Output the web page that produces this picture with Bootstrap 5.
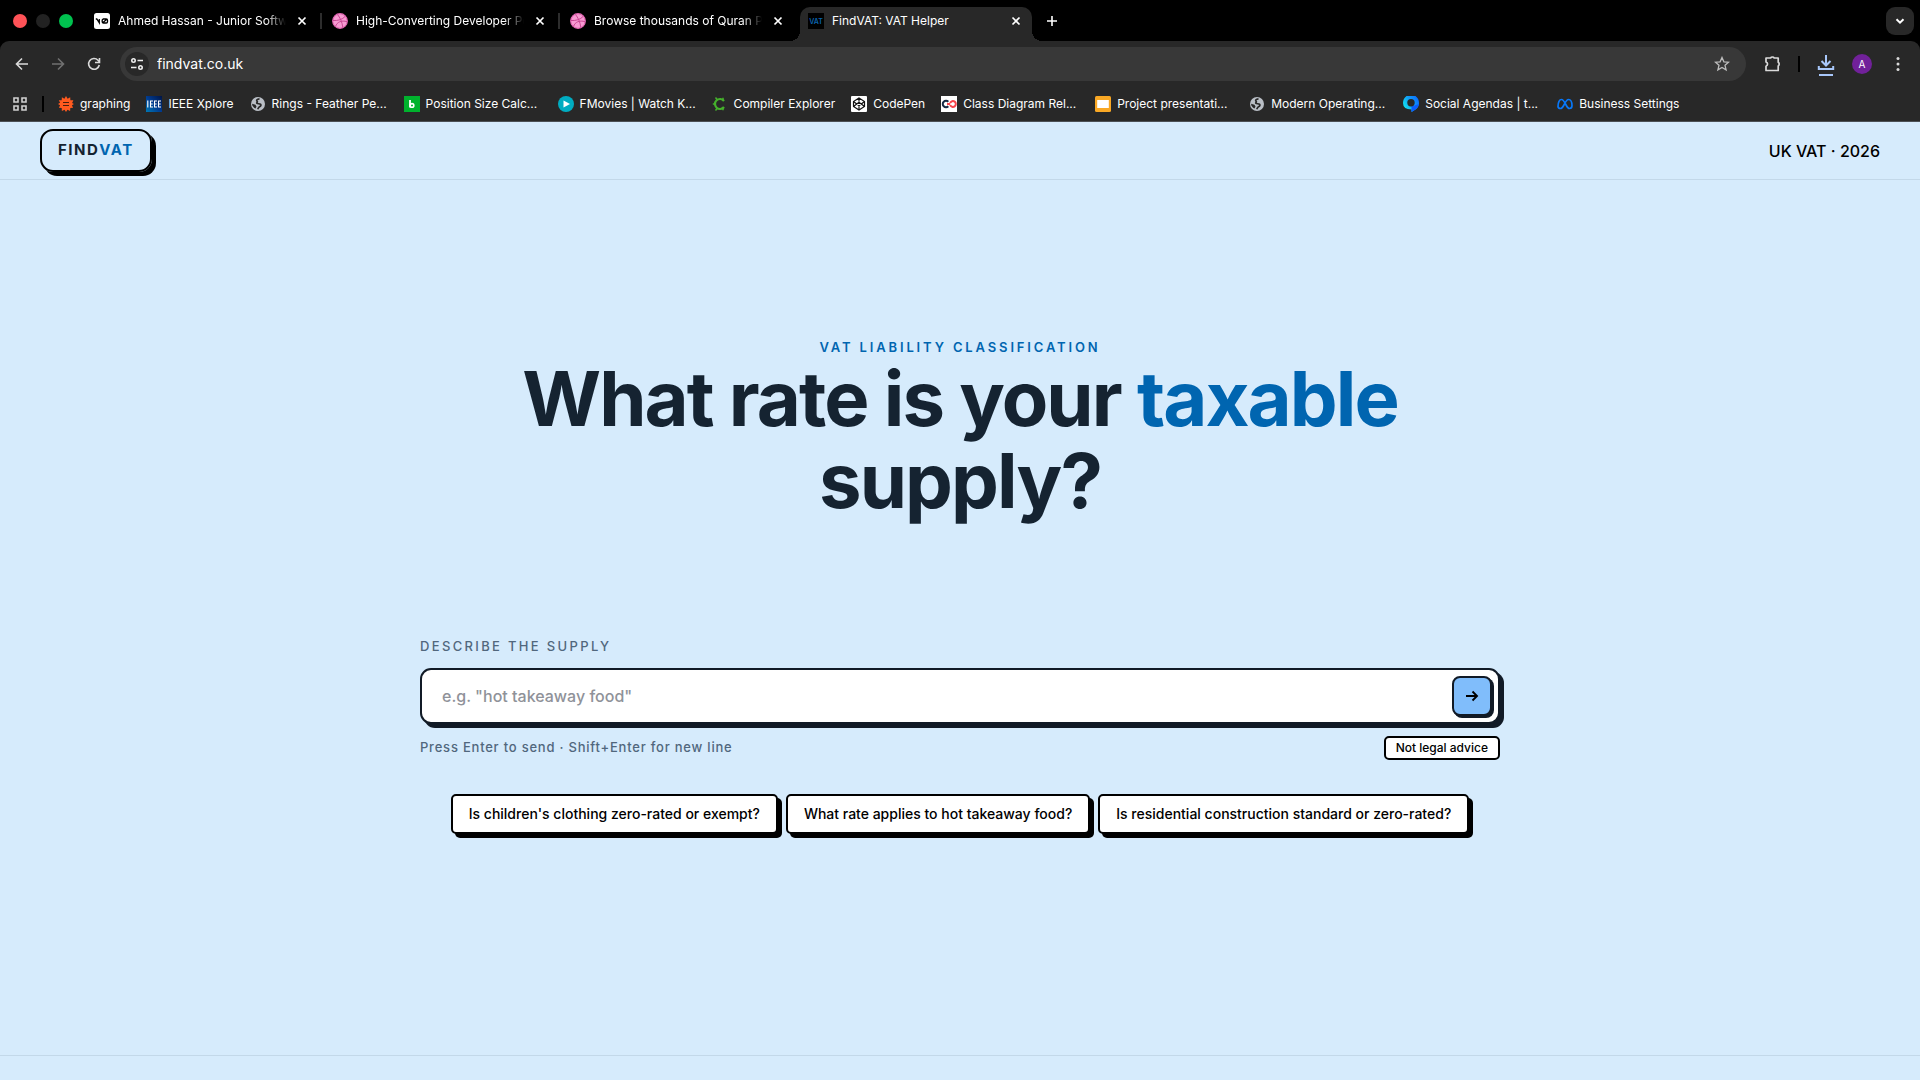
<!DOCTYPE html>
<html lang="en">
<head>
<meta charset="utf-8">
<meta name="viewport" content="width=device-width, initial-scale=1">
<title>FindVAT: VAT Helper</title>
<link rel="stylesheet" href="https://cdn.jsdelivr.net/npm/bootstrap@5.3.0/dist/css/bootstrap.min.css">
<style>
:root{--ink:#152331;--blue:#0065b0;--sky:#d6ebfc;--muted-ink:#51677d;--chrome:#282828}
body{font-family:Inter,"Liberation Sans",sans-serif;background:var(--sky);color:#000;min-height:100vh}
a{text-decoration:none;color:inherit}
svg{display:block;flex:none}
.plain-btn{border:0;background:none;padding:0;color:inherit;display:flex;align-items:center;justify-content:center}

/* browser window */
.tabstrip{background:#000;height:41px;padding-right:6px}
.lights{width:82px;padding-left:13px;gap:9px}
.dot{width:14px;height:14px;border-radius:50%}
.dot-red{background:#ff5257}.dot-grey{background:#222}.dot-green{background:#00c24f}
.tab-item{width:238px;height:34px;padding:0 10px 6px 12px;color:#fff;font-size:12px;font-weight:400;gap:8px;position:relative}
.tab-item.divided::after{content:"";position:absolute;right:-2px;top:6px;width:2px;height:16px;background:#2d2d2d}
.tab-text{flex:1;overflow:hidden;white-space:nowrap}
.tab-text.fades{-webkit-mask-image:linear-gradient(90deg,#000 88%,transparent);mask-image:linear-gradient(90deg,#000 88%,transparent)}
.tab-current{background:var(--chrome);border-radius:10px 10px 0 0;width:232px;margin-left:4px;padding:0 8px 6px}
.tab-current::before,.tab-current::after{content:"";position:absolute;bottom:0;width:10px;height:10px}
.tab-current::before{left:-10px;background:radial-gradient(circle at 0 0,transparent 10px,var(--chrome) 10px)}
.tab-current::after{right:-10px;background:radial-gradient(circle at 100% 0,transparent 10px,var(--chrome) 10px)}
.close-btn{width:16px;height:16px;color:#fff}
.tab-menu{width:28px;height:28px;background:var(--chrome);border-radius:9px;color:#fff}
.corner-fill{background:#000}
.tools{background:var(--chrome);border-radius:9px 9px 0 0;height:46px;padding:0 12px;color:#dadada}
.tools .plain-btn{width:20px;height:20px}
.omnibox{background:#383838;border-radius:17px;height:34px;padding:0 14px 0 5px;gap:8px}
.site-info{width:24px!important;height:24px!important;border-radius:50%;background:var(--chrome);color:#eee}
.address{flex:1;background:none;border:0;outline:0;color:#fff;font-size:14px;font-weight:400;padding:0 0 1px}
.avatar{border-radius:50%;background:#71219a;color:#fff;font-size:10px}
.bar{width:2px;height:16px;background:#000}
.marks{background:var(--chrome);height:35px;border-bottom:1px solid #4b5055;padding:0 12px;font-size:12px;font-weight:400;color:#fff;gap:16px}
.marks .bar{margin:0 -2px}
.marks a{gap:6px;white-space:nowrap}
.marks a.long span{width:116px}

/* page */
.site-head{height:58px;padding:0 40px;border-bottom:1px solid #c3d8e9}
.brand{border:2px solid #000;border-radius:13px;box-shadow:4px 4px 0 #000;height:43px;padding:0 16px 1px;font-size:15px;font-weight:700;letter-spacing:.1em;color:var(--ink)}
.brand-accent,.hero-title em{color:var(--blue);font-style:normal}
.edition{font-size:16px;font-weight:500}
.site-main{padding-top:157px;padding-bottom:200px}
.eyebrow{font-size:13px;line-height:20px;font-weight:600;letter-spacing:.22em;color:var(--blue);margin:0}
.hero-title{font-size:76px;line-height:82px;font-weight:700;letter-spacing:-.025em;color:var(--ink);max-width:960px;margin:0 auto 115px}
.ask{max-width:1080px;margin:0 auto}
.ask-label{font-size:13px;line-height:20px;font-weight:500;letter-spacing:.18em;color:var(--muted-ink);margin-bottom:12px}
.ask-box{background:#fff;border:2px solid #111a26;border-radius:11px;box-shadow:4px 4px 0 #111a26;height:56px;padding:0 6px 0 20px}
.ask-input{flex:1;border:0;outline:0;background:none;padding:0;font-size:16px;font-weight:500;color:var(--ink)}
.ask-input::placeholder{color:#8f9299;opacity:1}
.send{width:40px;height:40px;background:#80bdfb;border:2px solid #111a26;border-radius:8px;box-shadow:2px 2px 0 #111a26;color:#000}
.hint{font-size:13px;letter-spacing:.06em;color:var(--muted-ink);font-weight:500}
.notice{background:#fff;border:2px solid #000;border-radius:5px;font-size:12px;line-height:20px;font-weight:500;padding:0 10px}
.chips{margin-top:34px}
.chip{background:#fff;border:2px solid #000;border-radius:5px;box-shadow:4px 4px 0 #000;height:40px;padding:0 16px 2px;font-size:14px;font-weight:500;color:#000}
.site-foot{border-top:1px solid #c3d8e9;height:25px}
</style>
<script src="https://cdn.jsdelivr.net/npm/bootstrap@5.3.0/dist/js/bootstrap.bundle.min.js"></script>
</head>
<body class="d-flex flex-column">
<svg width="0" height="0" class="position-absolute" aria-hidden="true">
<defs>
<symbol id="x" viewBox="0 0 16 16"><path d="M4.500 4.500l7 7M11.500 4.500l-7 7" stroke="currentColor" stroke-width="1.700"/></symbol>
<symbol id="ball" viewBox="0 0 16 16"><circle cx="8" cy="8" r="7.300" fill="#f79ad2" stroke="#e467b4" stroke-width="1.200"/><path d="M5.500 1.500C8 4.500 10.200 9 10.800 14.500M1 7.500c5 .3 9.500-1 12-4M3.500 13.500C5 9 9.500 7 15 8.700" fill="none" stroke="#c94793" stroke-width="1"/></symbol>
<symbol id="globe" viewBox="0 0 16 16"><circle cx="8" cy="8" r="7" fill="#b9bec5"/><path d="M9.500 2.800C7 3 6 4.300 7.200 5.300c.8.900-1 1-.4 1.900.8.800 2.600.3 3.700 1 1 .9.200 2.200-1 2.500-.8.400-.8 1.300-2 2.300" fill="none" stroke="#282828" stroke-width="1.700"/><path d="M2 7.800l3.500 1 1 1.700-1 2C3.500 11.800 2.200 9.800 2 7.800z" fill="#282828"/></symbol>
</defs>
</svg>

<header>
<nav class="tabstrip d-flex align-items-end" aria-label="Tabs">
<div class="lights d-flex align-self-center"><span class="dot dot-red"></span><span class="dot dot-grey"></span><span class="dot dot-green"></span></div>
<div class="tab-item divided d-flex align-items-center">
<svg width="16" height="16"><rect width="16" height="16" rx="2.500" fill="#fff"/><path d="M1.800 6h1l2.500 3.800V6M9 6h3.200q1.300 0 1.300 1.200v1.600q0 1.200-1.300 1.200H9.500Q8.200 10 8.200 8.800V7.200Q8.200 6 9.500 6zM9 9.600L12.800 6.300" fill="none" stroke="#000" stroke-width="1.300"/></svg>
<span class="tab-text fades">Ahmed Hassan - Junior Software</span>
<button class="plain-btn close-btn" aria-label="Close tab"><svg width="16" height="16"><use href="#x"/></svg></button></div>
<div class="tab-item divided d-flex align-items-center">
<svg width="16" height="16"><use href="#ball"/></svg>
<span class="tab-text fades">High-Converting Developer Portfolio</span>
<button class="plain-btn close-btn" aria-label="Close tab"><svg width="16" height="16"><use href="#x"/></svg></button></div>
<div class="tab-item d-flex align-items-center">
<svg width="16" height="16"><use href="#ball"/></svg>
<span class="tab-text fades">Browse thousands of Quran Project</span>
<button class="plain-btn close-btn" aria-label="Close tab"><svg width="16" height="16"><use href="#x"/></svg></button></div>
<div class="tab-item tab-current d-flex align-items-center">
<svg width="16" height="16"><rect width="16" height="16" fill="#000"/><text x="8" y="10.500" font-size="7" font-weight="600" text-anchor="middle" fill="#0a64ad" font-family="Inter, sans-serif">VAT</text></svg>
<span class="tab-text">FindVAT: VAT Helper</span>
<button class="plain-btn close-btn" aria-label="Close tab"><svg width="16" height="16"><use href="#x"/></svg></button></div>
<button class="plain-btn align-self-center ms-2 px-1 text-white" aria-label="New tab"><svg width="16" height="16"><path d="M8 3v10M3 8h10" stroke="currentColor" stroke-width="1.600"/></svg></button>
<button class="plain-btn tab-menu ms-auto align-self-center" aria-label="Search tabs"><svg width="12" height="12"><path d="M2.500 4.300L6 7.700l3.500-3.400" fill="none" stroke="currentColor" stroke-width="2"/></svg></button>
</nav>
<div class="corner-fill">
<div class="tools d-flex align-items-center gap-3">
<button class="plain-btn" aria-label="Back"><svg width="16" height="16"><path d="M14 8H3M8 2.500L2.500 8 8 13.500" fill="none" stroke="currentColor" stroke-width="1.600"/></svg></button>
<button class="plain-btn" aria-label="Forward"><svg width="16" height="16"><path d="M2 8h11M8 2.500L13.500 8 8 13.500" fill="none" stroke="#707070" stroke-width="1.600"/></svg></button>
<button class="plain-btn" aria-label="Reload"><svg width="16" height="16"><path d="M13.300 9A5.400 5.400 0 1 1 12 4.200L13.300 5.500M13.500 2v4.500H9" fill="none" stroke="currentColor" stroke-width="1.600"/></svg></button>
<div class="omnibox d-flex align-items-center flex-grow-1">
<button class="plain-btn site-info" aria-label="Site information"><svg width="14" height="14"><g fill="none" stroke="currentColor" stroke-width="1.600"><circle cx="3.500" cy="3.500" r="1.700"/><path d="M7.500 3.500H13M1 10.500h5.500"/><circle cx="10.500" cy="10.500" r="1.700"/></g></svg></button>
<input class="address" type="text" value="findvat.co.uk" aria-label="Address">
<button class="plain-btn" aria-label="Bookmark"><svg width="16" height="16"><path d="M8 1.500l1.900 4.300 4.600.4-3.500 3.100 1.100 4.600L8 11.400l-4.100 2.500L5 9.300 1.500 6.200l4.600-.4z" fill="none" stroke="#bdbdbd" stroke-width="1.300"/></svg></button>
</div>
<button class="plain-btn" aria-label="Extensions"><svg width="20" height="20"><path d="M4 4h4.600a2 1.800 0 0 1 3.600 0h4v4.300a1.800 2 0 0 1 0 3.600v4.600H4v-4.300a2.200 2.200 0 0 0 0-4.200z" fill="none" stroke="currentColor" stroke-width="1.700" stroke-linejoin="round"/></svg></button>
<span class="bar"></span>
<button class="plain-btn" aria-label="Downloads"><svg width="20" height="24"><path d="M10 3v10M5.500 9l4.500 4.500L14.500 9M2.800 14v3h14.400v-3M3 23h14" fill="none" stroke="#a8c7fa" stroke-width="2"/></svg></button>
<button class="plain-btn avatar" aria-label="Profile">A</button>
<button class="plain-btn" aria-label="Menu"><svg width="16" height="16" fill="currentColor"><circle cx="8" cy="2.500" r="1.500"/><circle cx="8" cy="8" r="1.500"/><circle cx="8" cy="13.500" r="1.500"/></svg></button>
</div>
</div>
<nav class="marks d-flex align-items-center" aria-label="Bookmarks">
<button class="plain-btn" aria-label="All apps"><svg width="16" height="16"><path d="M2 2h4v4H2zM10 2h4v4h-4zM2 10h4v4H2zM10 10h4v4h-4z" fill="none" stroke="#d0d0d0" stroke-width="1.600"/></svg></button>
<span class="bar"></span>
<a href="#" class="d-flex align-items-center"><svg width="16" height="16"><path d="M8 0l1.600 2.700 2.600-1.400.2 2.900 3 .1-1.300 2.600L16 8l-2.100 1.300 1.200 2.500-2.800.2-.2 2.900-2.600-1.200L8 16l-1.500-2.300-2.600 1.200-.2-2.900-2.800-.2 1.200-2.500L0 8l2.100-1.300L.800 4.300l2.900-.1.200-2.900 2.500 1.400z" fill="#ff5a1f"/><path d="M5 6.500h6M5 9.500h6" stroke="#47200f" stroke-width="1.200"/></svg><span>graphing</span></a>
<a href="#" class="d-flex align-items-center"><svg width="16" height="16"><defs><linearGradient id="ig" x1="0" y1="1" x2="1" y2="0"><stop stop-color="#0078b4"/><stop offset=".5" stop-color="#003a8e"/><stop offset="1" stop-color="#001445"/></linearGradient></defs><rect width="16" height="16" fill="url(#ig)"/><path d="M1.800 4.500v7M7 5H4.500v6H7M4.500 8h2.200M11 5H8.500v6H11M8.500 8h2.200M15 5h-2.500v6H15M12.500 8h2.200" fill="none" stroke="#fff" stroke-width="1.100"/></svg><span>IEEE Xplore</span></a>
<a href="#" class="long d-flex align-items-center"><svg width="16" height="16"><use href="#globe"/></svg><span>Rings - Feather Pe...</span></a>
<a href="#" class="long d-flex align-items-center"><svg width="16" height="16"><rect width="16" height="16" fill="#00b22d"/><path d="M6 4v7.500" stroke="#fff" stroke-width="1.800"/><circle cx="8" cy="9.400" r="1.800" fill="none" stroke="#fff" stroke-width="1.600"/></svg><span>Position Size Calc...</span></a>
<a href="#" class="long d-flex align-items-center"><svg width="16" height="16"><circle cx="8" cy="8" r="8" fill="#00acc1"/><path d="M5.500 4.500v7L12 8z" fill="#fff"/></svg><span>FMovies | Watch K...</span></a>
<a href="#" class="d-flex align-items-center"><svg width="16" height="16"><path d="M12 5A5 5 0 1 0 12 11" fill="none" stroke="#45b02c" stroke-width="2.200"/><path d="M3.500 1.500l2 2.500M3.500 14.500l2-2.500M.8 8H4M11 1.800v3M11 14.200v-3" stroke="#45b02c" stroke-width="1.500"/></svg><span>Compiler Explorer</span></a>
<a href="#" class="d-flex align-items-center"><svg width="16" height="16"><rect width="16" height="16" rx="1" fill="#fff"/><path d="M8 2l5.500 3.600v4.800L8 14l-5.500-3.600V5.600zM8 2v3.600M8 10.400V14M2.500 5.600L8 9.800l5.500-4.200M2.500 10.400L8 6.200l5.500 4.200" fill="none" stroke="#111" stroke-width="1.200"/></svg><span>CodePen</span></a>
<a href="#" class="long d-flex align-items-center"><svg width="16" height="16"><rect width="16" height="16" fill="#fff"/><path d="M7.300 5.800A3.200 3.200 0 1 0 7.300 10.200" fill="none" stroke="#172b45" stroke-width="2"/><path d="M6 8h3.200M9.200 9A2.900 2.900 0 1 0 9.200 7" fill="none" stroke="#f8444b" stroke-width="2"/></svg><span>Class Diagram Rel...</span></a>
<a href="#" class="long d-flex align-items-center"><svg width="16" height="16"><rect width="16" height="16" rx="1.500" fill="#f9a825"/><rect x="2.200" y="4" width="11.600" height="8" fill="#fff"/></svg><span>Project presentati...</span></a>
<a href="#" class="long d-flex align-items-center"><svg width="16" height="16"><use href="#globe"/></svg><span>Modern Operating...</span></a>
<a href="#" class="long d-flex align-items-center"><svg width="16" height="16"><defs><linearGradient id="sg" x1="0" y1=".8" x2="1" y2=".2"><stop stop-color="#10f0ee"/><stop offset=".5" stop-color="#12a4f5"/><stop offset="1" stop-color="#0a6cff"/></linearGradient></defs><path d="M3.500 0h9Q16 2.500 16 7q0 4-3.500 6.500L8.500 16v-2.500Q0 13.500 0 7 0 2.500 3.500 0z" fill="url(#sg)"/><path d="M8.500 10.500L15.800 8q-.3 3.500-3.300 5.500L8.500 16z" fill="#0a5cff"/><circle cx="8" cy="6.800" r="3.700" fill="#282828"/></svg><span>Social Agendas | t...</span></a>
<a href="#" class="d-flex align-items-center"><svg width="16" height="16"><path d="M1 10.500C1 6 2.500 3.500 4.500 3.500c3.500 0 4.500 9 8 9 1.500 0 2.500-1 2.500-3C15 6 13.700 3.500 11.500 3.500c-3.500 0-4.500 9-8 9C2 12.500 1 12 1 10.500z" fill="none" stroke="#0878f9" stroke-width="1.700"/></svg><span>Business Settings</span></a>
</nav>
</header>

<div class="site-head d-flex align-items-center justify-content-between">
<a href="#" class="brand d-flex align-items-center">FIND<span class="brand-accent">VAT</span></a>
<span class="edition">UK VAT · 2026</span>
</div>

<main class="site-main flex-grow-1">
<section class="text-center">
<p class="eyebrow">VAT LIABILITY CLASSIFICATION</p>
<h1 class="hero-title">What rate is your <em>taxable</em> supply?</h1>
</section>
<form class="ask">
<label class="ask-label d-block" for="supply">DESCRIBE THE SUPPLY</label>
<div class="ask-box d-flex align-items-center">
<input class="ask-input" id="supply" type="text" placeholder="e.g. &quot;hot takeaway food&quot;">
<button type="button" class="plain-btn send" aria-label="Send"><svg width="16" height="16"><path d="M2 8h11M8.500 3.500L13 8l-4.500 4.500" fill="none" stroke="currentColor" stroke-width="1.900"/></svg></button>
</div>
<div class="d-flex justify-content-between align-items-center mt-2 pt-1">
<span class="hint">Press Enter to send · Shift+Enter for new line</span>
<span class="notice">Not legal advice</span>
</div>
<div class="chips d-flex flex-wrap justify-content-center gap-2">
<button type="button" class="chip">Is children's clothing zero-rated or exempt?</button>
<button type="button" class="chip">What rate applies to hot takeaway food?</button>
<button type="button" class="chip">Is residential construction standard or zero-rated?</button>
</div>
</form>
</main>
<footer class="site-foot"></footer>
</body>
</html>
